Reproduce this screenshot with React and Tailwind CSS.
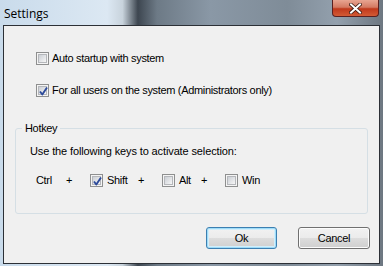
import React from "react";

function Check({ checked }) {
  return (
    <span className="relative inline-flex h-[13px] w-[13px] shrink-0 items-center justify-center border border-[#8e8f8f] bg-[#f4f4f4]">
      <span className="h-[9px] w-[9px] border border-[#b5b7bb] bg-[linear-gradient(135deg,#cbcfd5,#f6f6f6)]" />
      {checked && (
        <svg className="absolute left-[1px] top-[1px]" width="11" height="11" viewBox="0 0 11 11">
          <path d="M2 5.5 L4.3 8.5 L9 1.5" fill="none" stroke="#2c4a9a" strokeWidth="1.9" strokeLinejoin="round" />
        </svg>
      )}
    </span>
  );
}

export default function App() {
  const font = { fontFamily: '"Liberation Sans", Arial, sans-serif' };
  return (
    <div
      className="flex h-[266px] w-[383px] flex-col overflow-hidden bg-[linear-gradient(90deg,#c9dbeb_0%,#dce8f3_28%,#c8d3dc_32%,#3d4650_36%,#6d7a86_41%,#8a98a6_55%,#7f8c98_75%,#93a0ad_88%,#6d7781_100%)] text-[11px] leading-[13px] tracking-[-0.33px] text-black"
      style={font}
    >
      <div className="flex h-[25px] shrink-0 items-start justify-between">
        <span className="mt-[6px] pl-[4px] text-[12px] leading-[16px] tracking-normal text-black" style={{ fontFamily: '"Open Sans", "Liberation Sans", sans-serif' }}>
          Settings
        </span>
        <div className="mr-[4px] flex h-[17px] w-[47px] items-center justify-center rounded-b-[4px] border border-t-0 border-[#5a2020] bg-[linear-gradient(180deg,#e8a592_0%,#d47a63_45%,#c0391c_55%,#d25a35_100%)]">
          <svg width="13" height="11" viewBox="0 0 13 11">
            <path d="M2 1.5 L11 9.5 M11 1.5 L2 9.5" stroke="#3a1a12" strokeWidth="3.6" strokeLinecap="square" />
            <path d="M2 1.5 L11 9.5 M11 1.5 L2 9.5" stroke="#ffffff" strokeWidth="2" strokeLinecap="square" />
          </svg>
        </div>
      </div>
      <div className="ml-[3px] flex h-[239px] w-[377px] flex-col border border-[#2c3036] bg-[#f0f0f0]">
        <div className="ml-[32px] mt-[26px] flex items-center gap-[3px]">
          <Check />
          <span>Auto startup with system</span>
        </div>
        <div className="ml-[32px] mt-[19px] flex items-center gap-[3px]">
          <Check checked />
          <span>For all users on the system (Administrators only)</span>
        </div>
        <div className="relative ml-[11px] mt-[31px] h-[86px] w-[353px] rounded-[3px] border border-[#d5dfe5]">
          <span className="absolute left-[6px] top-[-7px] bg-[#f0f0f0] px-[3px] leading-[13px]">Hotkey</span>
          <div className="ml-[14px] mt-[16px] tracking-[-0.12px]">Use the following keys to activate selection:</div>
          <div className="ml-[20px] mt-[16px] flex items-center">
            <span className="w-[30px]">Ctrl</span>
            <span className="w-[24px]">+</span>
            <span className="flex w-[48px] items-center gap-[4px]">
              <Check checked />
              <span>Shift</span>
            </span>
            <span className="w-[24px]">+</span>
            <span className="flex w-[39px] items-center gap-[4px]">
              <Check />
              <span>Alt</span>
            </span>
            <span className="w-[24px]">+</span>
            <span className="flex items-center gap-[4px]">
              <Check />
              <span>Win</span>
            </span>
          </div>
        </div>
        <div className="mt-[13px] flex justify-end gap-[21px] pr-[9px]">
          <button className="flex h-[22px] w-[71px] items-center justify-center rounded-[3px] border border-[#3c7fb1] bg-[linear-gradient(180deg,#f2f2f2_0%,#ebebeb_50%,#dddddd_51%,#cfcfcf_100%)] shadow-[inset_0_0_0_1px_#9fdcf8,inset_0_0_0_2px_#d2eefb]">
            Ok
          </button>
          <button className="flex h-[22px] w-[72px] items-center justify-center rounded-[3px] border border-[#707070] bg-[linear-gradient(180deg,#f2f2f2_0%,#ebebeb_50%,#dddddd_51%,#cfcfcf_100%)] shadow-[inset_0_0_0_1px_#fcfcfc]">
            Cancel
          </button>
        </div>
      </div>
    </div>
  );
}
